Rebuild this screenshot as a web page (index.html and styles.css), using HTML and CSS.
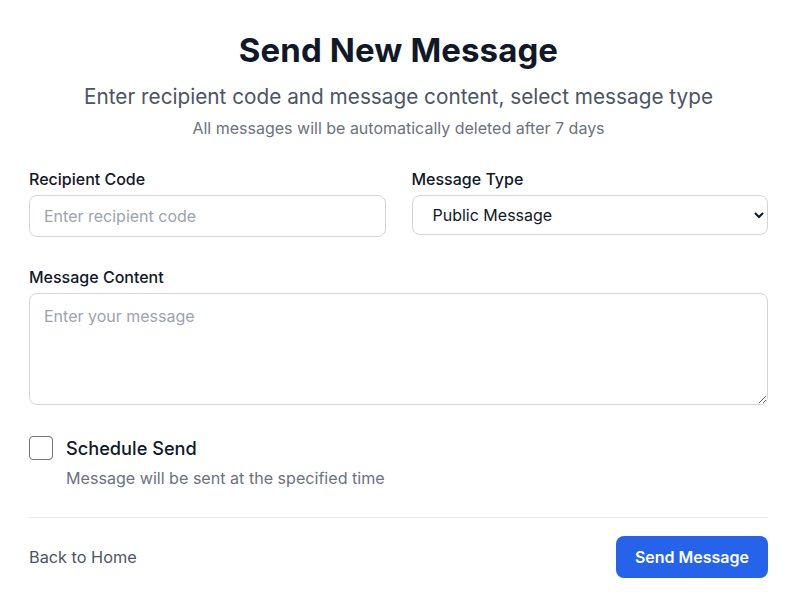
FILE: index.html
```html
<!DOCTYPE html>
<html lang="en">
<head>
<meta charset="utf-8">
<title>Send New Message</title>
<link rel="stylesheet" href="styles.css">
</head>
<body>
<main class="page">
  <header class="intro">
    <h1 class="title">Send New Message</h1>
    <p class="subtitle">Enter recipient code and message content, select message type</p>
    <p class="note">All messages will be automatically deleted after 7 days</p>
  </header>

  <form class="form">
    <div class="row">
      <div class="field">
        <label class="label" for="code">Recipient Code</label>
        <input class="input" id="code" type="text" placeholder="Enter recipient code">
      </div>
      <div class="field">
        <label class="label" for="type">Message Type</label>
        <select class="select" id="type">
          <option>Public Message</option>
          <option>Private Message</option>
        </select>
      </div>
    </div>

    <div class="field field-content">
      <label class="label" for="content">Message Content</label>
      <textarea class="textarea" id="content" placeholder="Enter your message"></textarea>
    </div>

    <div class="schedule">
      <label class="check-row">
        <input class="checkbox" type="checkbox">
        <span class="check-label">Schedule Send</span>
      </label>
      <p class="check-help">Message will be sent at the specified time</p>
    </div>

    <div class="footer">
      <a class="back" href="#">Back to Home</a>
      <button class="send" type="button">Send Message</button>
    </div>
  </form>
</main>
</body>
</html>
```

FILE: styles.css
```css
* { box-sizing: border-box; }

html, body {
  margin: 0;
  padding: 0;
  background: #ffffff;
}

body {
  font-family: Inter, "Noto Sans", sans-serif;
  color: #111827;
}

.page {
  width: 739px;
  margin-left: 29px;
  padding-top: 30px;
}

.intro {
  text-align: center;
  margin-bottom: 29px;
}

.title {
  margin: 0;
  font-size: 33px;
  line-height: 40px;
  font-weight: 700;
  color: #111827;
  letter-spacing: 0.1px;
}

.subtitle {
  margin: 13px 0 0;
  font-size: 20.75px;
  line-height: 28px;
  color: #4b5563;
}

.note {
  margin: 7px 0 0;
  font-size: 16px;
  line-height: 20px;
  color: #6b7280;
}

.form {
  display: flex;
  flex-direction: column;
}

.row {
  display: grid;
  grid-template-columns: 1fr 1fr;
  column-gap: 26px;
  align-items: start;
}

.field {
  display: flex;
  flex-direction: column;
}

.label {
  font-size: 16px;
  line-height: 24px;
  font-weight: 500;
  color: #111827;
  margin-bottom: 4px;
}

.input,
.textarea,
.select {
  font-family: inherit;
  font-size: 16px;
  line-height: 24px;
  color: #111827;
  background: #ffffff;
  border: 1px solid #d1d5db;
  border-radius: 8px;
  outline: none;
}

.input {
  height: 42px;
  padding: 8px 14px;
}

.input::placeholder,
.textarea::placeholder {
  color: #9ca3af;
}

.select {
  height: 40px;
  padding: 0 8px 0 16px;
  color: #111827;
}

.field-content {
  margin-top: 28px;
}

.textarea {
  height: 112px;
  padding: 10px 14px;
  resize: vertical;
}

.schedule {
  margin-top: 29px;
  padding-bottom: 27px;
  border-bottom: 1px solid #e5e7eb;
}

.check-row {
  display: flex;
  align-items: center;
  gap: 13px;
  height: 28px;
}

.checkbox {
  appearance: none;
  -webkit-appearance: none;
  width: 24px;
  height: 24px;
  margin: 0;
  border: 1px solid #737373;
  border-radius: 4px;
  background: #ffffff;
}

.check-label {
  font-size: 18.2px;
  line-height: 28px;
  font-weight: 500;
  color: #111827;
}

.check-help {
  margin: 4px 0 0 37px;
  font-size: 16.1px;
  line-height: 24px;
  color: #6b7280;
}

.footer {
  display: flex;
  justify-content: space-between;
  align-items: center;
  padding-top: 18px;
}

.back {
  font-size: 16.3px;
  line-height: 24px;
  color: #4b5563;
  text-decoration: none;
}

.send {
  font-family: inherit;
  height: 42px;
  padding: 0 19px;
  border: none;
  border-radius: 8px;
  background: #2563eb;
  color: #ffffff;
  font-size: 16px;
  font-weight: 600;
}
```
